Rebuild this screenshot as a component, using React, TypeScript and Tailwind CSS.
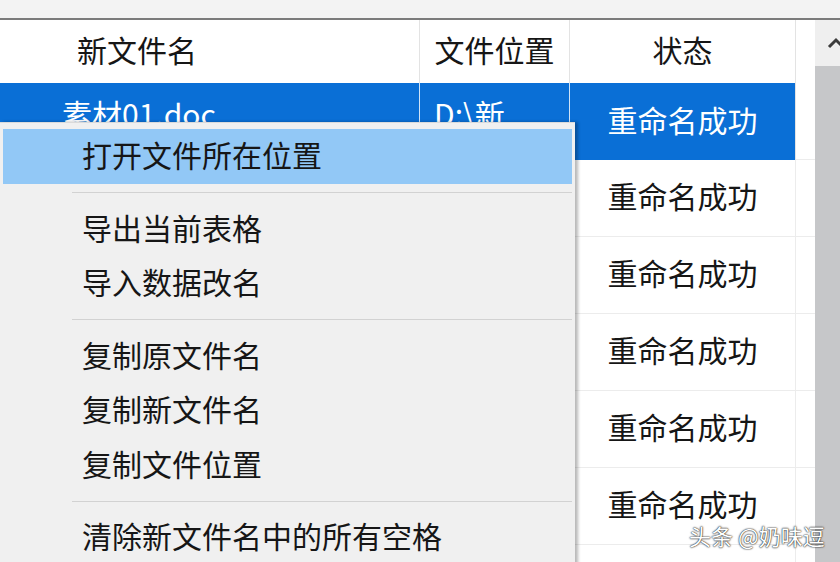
const rows = ["重命名成功", "重命名成功", "重命名成功", "重命名成功", "重命名成功", "重命名成功", ""];

type MenuEntry = { label?: string; sep?: boolean; active?: boolean };

const menu: MenuEntry[] = [
  { label: "打开文件所在位置", active: true },
  { sep: true },
  { label: "导出当前表格" },
  { label: "导入数据改名" },
  { sep: true },
  { label: "复制原文件名" },
  { label: "复制新文件名" },
  { label: "复制文件位置" },
  { sep: true },
  { label: "清除新文件名中的所有空格" },
];

export default function App() {
  return (
    <div
      className="relative w-[840px] h-[562px] overflow-hidden bg-white text-[#161616]"
      style={{ fontFamily: '"Noto Sans CJK SC", "Noto Sans", sans-serif' }}
    >
      {/* Top strip */}
      <div className="h-[20px] bg-[#f3f3f3] border-b-2 border-[#7b7b7b]" />

      <div className="flex">
        {/* Table */}
        <div className="w-[815px]">
          {/* Header */}
          <div className="flex h-[63px] text-[30px] leading-none">
            <div className="w-[420px] border-r border-[#e3e3e3] flex items-center pl-[77px] pb-[5px]">新文件名</div>
            <div className="w-[150px] border-r border-[#e3e3e3] flex items-center justify-center pb-[5px]">文件位置</div>
            <div className="w-[226px] border-r border-[#e3e3e3] flex items-center justify-center pb-[5px]">状态</div>
            <div className="flex-1" />
          </div>

          {/* Rows */}
          {rows.map((status, i) => {
            const selected = i === 0;
            return (
              <div key={i} className="flex h-[77px] text-[30px] leading-none">
                <div
                  className={`w-[420px] border-r flex pl-[62px] ${
                    selected ? "bg-[#0a6fd6] text-white border-[#cfe3f7] items-start pt-[15px]" : "border-[#ececec] border-b"
                  }`}
                >
                  {selected ? "素材01.doc" : ""}
                </div>
                <div
                  className={`w-[150px] border-r flex pl-[14px] ${
                    selected ? "bg-[#0a6fd6] text-white border-[#cfe3f7] items-start pt-[15px]" : "border-[#ececec] border-b"
                  }`}
                >
                  {selected ? "D:\\新" : ""}
                </div>
                <div
                  className={`w-[226px] border-r flex items-center justify-center pb-[6px] ${
                    selected ? "bg-[#0a6fd6] text-white border-[#e3e3e3]" : "border-[#ececec] border-b"
                  }`}
                >
                  {status}
                </div>
                <div className="flex-1 border-b border-[#ececec]" />
              </div>
            );
          })}
        </div>

        {/* Scrollbar */}
        <div className="w-[25px] flex flex-col">
          <div className="h-[46px] bg-[#efefef] flex items-center justify-end">
            <svg width="20" height="14" viewBox="0 0 20 14" className="mr-[-6px]">
              <path d="M3 11 L10 4 L17 11" fill="none" stroke="#3c3c3c" strokeWidth="3" />
            </svg>
          </div>
          <div className="flex-1 h-[500px] bg-[#c6c7c9]" />
        </div>
      </div>

      {/* Context menu */}
      <div className="absolute left-0 top-[122px] w-[575px] bg-[#f0f0f0] border-t border-[#dadada] pt-[6px] px-[3px] shadow-[3px_0_3px_rgba(0,0,0,0.28)]">
        {menu.map((m, i) =>
          m.sep ? (
            <div key={i} className="h-[18px] flex items-center pl-[69px]">
              <div className="h-px flex-1 bg-[#d2d2d2]" />
            </div>
          ) : (
            <div
              key={i}
              className={`h-[54.5px] flex items-center pl-[79px] pb-[4px] text-[30px] leading-none ${
                m.active ? "bg-[#92c8f6]" : ""
              }`}
            >
              {m.label}
            </div>
          )
        )}
      </div>

      {/* Watermark */}
      <div className="absolute left-[689px] top-[524px] text-[22px] leading-none text-white [text-shadow:0_0_2px_rgba(0,0,0,0.9),0_0_1px_rgba(0,0,0,0.9)] whitespace-nowrap">
        头条 @奶味逗
      </div>
    </div>
  );
}
